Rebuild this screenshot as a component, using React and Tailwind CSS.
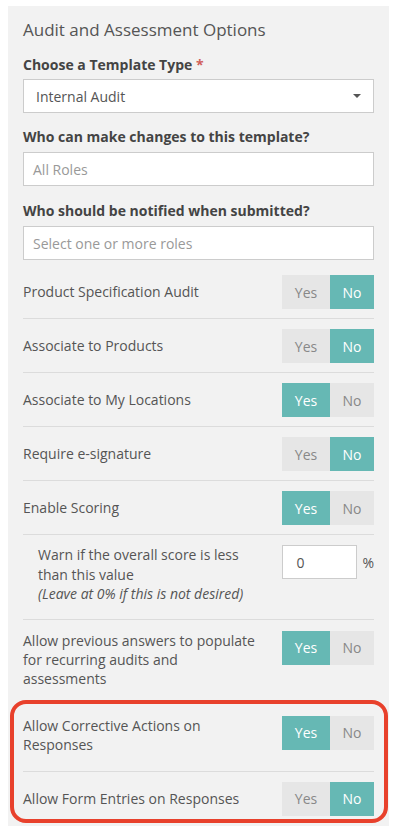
import { useState } from 'react'

const font = { fontFamily: '"Open Sans", "Noto Sans", sans-serif' }

function Toggle({ value, onChange }) {
  return (
    <div className="flex h-[34px] shrink-0 text-[14px]">
      <button
        type="button"
        onClick={() => onChange(true)}
        className={
          value
            ? 'w-[48px] bg-[#66b8b4] text-white'
            : 'w-[48px] bg-[#e6e6e6] text-[#888]'
        }
      >
        Yes
      </button>
      <button
        type="button"
        onClick={() => onChange(false)}
        className={
          value
            ? 'w-[44px] bg-[#e6e6e6] text-[#888]'
            : 'w-[44px] bg-[#66b8b4] text-white'
        }
      >
        No
      </button>
    </div>
  )
}

function ToggleRow({ label, multi, value, onChange, divider = true, first }) {
  return (
    <div
      className={
        (divider ? 'border-b border-[#dcdcdc] ' : '') +
        (first ? 'pt-[15px] ' : 'pt-[10px] ') +
        'flex items-start justify-between'
      }
    >
      <div
        className={
          multi
            ? 'w-[240px] pb-[17px] text-[14px] leading-[19px] text-[#555]'
            : 'pt-[7px] pb-[16px] text-[14px] leading-[19px] text-[#555]'
        }
      >
        {label}
      </div>
      <div className="mb-[9px]">
        <Toggle value={value} onChange={onChange} />
      </div>
    </div>
  )
}

export default function App() {
  const [opts, setOpts] = useState({
    spec: false,
    products: false,
    locations: true,
    esig: false,
    scoring: true,
    previous: true,
    corrective: true,
    entries: false,
  })
  const set = (key) => (v) => setOpts((o) => ({ ...o, [key]: v }))

  return (
    <div className="min-h-[826px] bg-white pt-[6px]" style={font}>
      <div className="ml-[8px] w-[381px] bg-[#f2f2f2] px-[15px] pt-[12px] pb-[10px]">
        <h2 className="text-[17px] leading-[24px] font-normal text-[#555]">
          Audit and Assessment Options
        </h2>

        <div className="mt-[13px] text-[14px] leading-[20px] font-bold text-[#444]">
          Choose a Template Type <span className="text-[#d0605a]">*</span>
        </div>
        <div className="mt-[4px] flex h-[34px] items-center justify-between border border-[#ccc] bg-white pr-[12px] pl-[12px] text-[14px] text-[#555]">
          <span>Internal Audit</span>
          <span className="h-0 w-0 border-x-[4px] border-t-[4px] border-x-transparent border-t-[#555]" />
        </div>

        <div className="mt-[14px] text-[14px] leading-[20px] font-bold text-[#444]">
          Who can make changes to this template?
        </div>
        <div className="mt-[5px] flex h-[34px] items-center border border-[#ccc] bg-white px-[9px] text-[14px] text-[#999]">
          All Roles
        </div>

        <div className="mt-[15px] text-[14px] leading-[20px] font-bold text-[#444]">
          Who should be notified when submitted?
        </div>
        <div className="mt-[5px] flex h-[34px] items-center border border-[#ccc] bg-white px-[9px] text-[14px] text-[#999]">
          Select one or more roles
        </div>

        <ToggleRow first label="Product Specification Audit" value={opts.spec} onChange={set('spec')} />
        <ToggleRow label="Associate to Products" value={opts.products} onChange={set('products')} />
        <ToggleRow label="Associate to My Locations" value={opts.locations} onChange={set('locations')} />
        <ToggleRow label="Require e-signature" value={opts.esig} onChange={set('esig')} />
        <ToggleRow label="Enable Scoring" value={opts.scoring} onChange={set('scoring')} />

        <div className="flex items-start justify-between border-b border-[#dcdcdc] pt-[10px]">
          <div className="w-[232px] pb-[15px] pl-[15px] text-[14px] leading-[19.5px] text-[#555]">
            Warn if the overall score is less than this value
            <div className="italic">(Leave at 0% if this is not desired)</div>
          </div>
          <div className="flex items-center">
            <div className="flex h-[34px] w-[75px] items-center border border-[#ccc] bg-white px-[13px] text-[14px] text-[#555]">
              0
            </div>
            <span className="ml-[5px] text-[14px] text-[#555]">%</span>
          </div>
        </div>

        <div className="flex items-start justify-between pt-[11px] pb-[12px]">
          <div className="w-[240px] text-[14px] leading-[19px] text-[#555]">
            Allow previous answers to populate for recurring audits and assessments
          </div>
          <Toggle value={opts.previous} onChange={set('previous')} />
        </div>

        <div className="-mr-[14px] -ml-[13px] rounded-[16px] border-[4px] border-[#e8412c] pt-[2px] pr-[10px] pb-[3px] pl-[9px]">
          <ToggleRow multi label="Allow Corrective Actions on Responses" value={opts.corrective} onChange={set('corrective')} />
          <div className="flex items-center justify-between pt-[10px]">
            <div className="text-[14px] leading-[19px] text-[#555]">Allow Form Entries on Responses</div>
            <Toggle value={opts.entries} onChange={set('entries')} />
          </div>
        </div>
      </div>
    </div>
  )
}
